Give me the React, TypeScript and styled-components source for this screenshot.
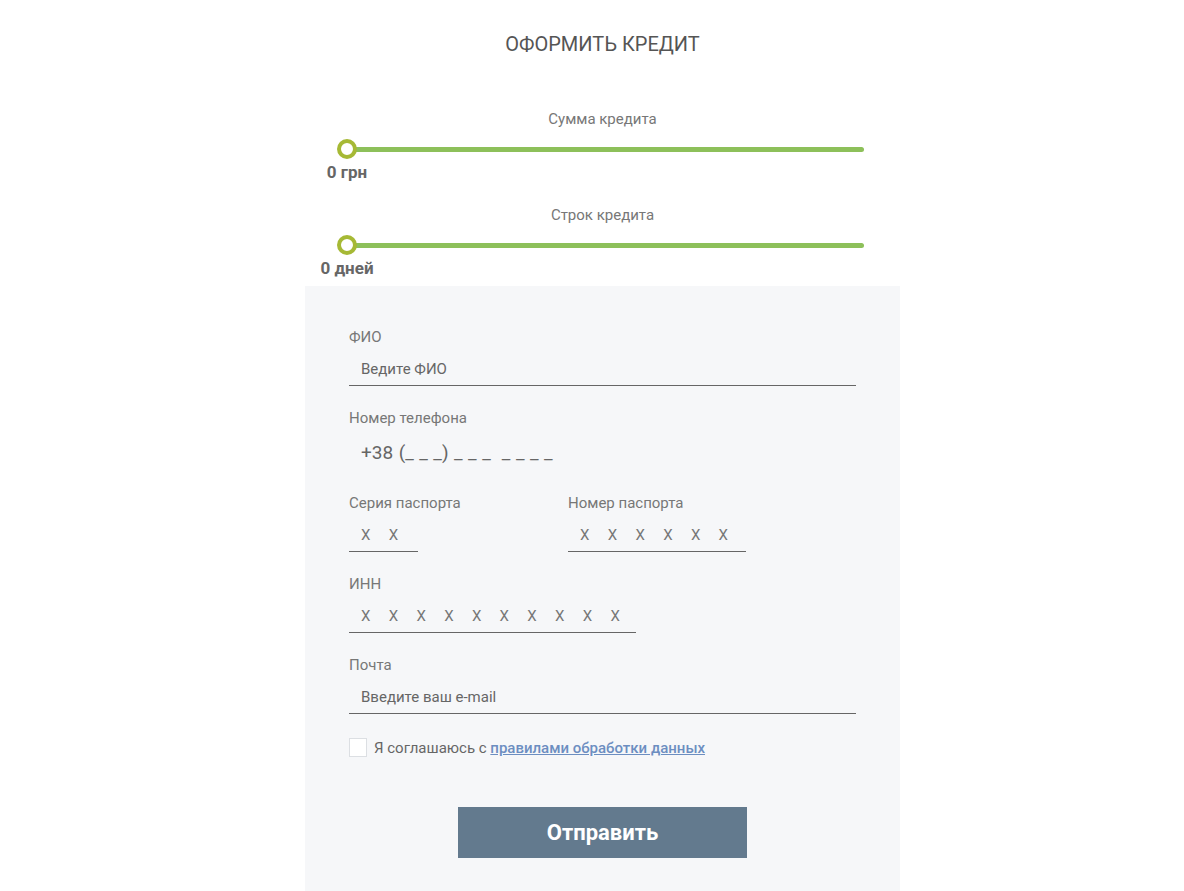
import React from "react";
import styled, { createGlobalStyle } from "styled-components";

const GlobalStyle = createGlobalStyle`
  * { box-sizing: border-box; }
  html, body { margin: 0; padding: 0; background: #ffffff; }
  body { font-family: Roboto, "Noto Sans", Arial, sans-serif; color: #666; }
`;

const Wrapper = styled.div`
  width: 595px;
  margin-left: 305px;
  display: flex;
  flex-direction: column;
`;

const Title = styled.h1`
  margin: 32px 0 0;
  font-size: 20px;
  line-height: 24px;
  font-weight: 400;
  color: #555;
  text-align: center;
  text-transform: uppercase;
`;

const Sliders = styled.div`
  margin-top: 55px;
  display: flex;
  flex-direction: column;
  gap: 25px;
  padding-bottom: 8px;
`;

const SliderGroup = styled.div`
  display: flex;
  flex-direction: column;
`;

const SliderLabel = styled.div`
  font-size: 15px;
  line-height: 17px;
  color: #777;
  text-align: center;
`;

const SliderRow = styled.div`
  position: relative;
  margin: 11px 36px 0 32px;
  height: 20px;
  display: flex;
  align-items: center;
`;

const Track = styled.div`
  margin-left: 10px;
  flex: 1;
  height: 5px;
  border-radius: 3px;
  background: #8dc05a;
`;

const Thumb = styled.div`
  position: absolute;
  left: 0;
  top: 0;
  width: 20px;
  height: 20px;
  border-radius: 50%;
  background: #fff;
  border: 4px solid #a6b935;
`;

const SliderValue = styled.div`
  margin-top: 3px;
  margin-left: 32px;
  width: 20px;
  display: flex;
  justify-content: center;
  white-space: nowrap;
  font-size: 17px;
  line-height: 20px;
  font-weight: 700;
  color: #666;
`;

const Panel = styled.form`
  background: #f6f7f9;
  padding: 43px 44px 40px;
  display: flex;
  flex-direction: column;
  min-height: 606px;
`;

const Field = styled.div<{ $width?: number }>`
  display: flex;
  flex-direction: column;
  width: ${(p) => (p.$width ? `${p.$width}px` : "100%")};
  margin-bottom: 24px;
`;

const Label = styled.label`
  font-size: 15px;
  line-height: 17px;
  color: #777;
  margin-bottom: 7px;
  white-space: nowrap;
`;

const Input = styled.input<{ $spaced?: boolean; $big?: boolean; $plain?: boolean }>`
  font-family: Roboto, "Noto Sans", Arial, sans-serif;
  height: ${(p) => (p.$big ? 37 : 33)}px;
  padding: 0 0 0 12px;
  border: none;
  border-bottom: 1px solid ${(p) => (p.$plain ? "transparent" : "#666")};
  background: transparent;
  outline: none;
  font-size: ${(p) => (p.$big ? 19 : 15)}px;
  letter-spacing: ${(p) => (p.$spaced ? "7.3px" : "normal")};
  word-spacing: ${(p) => (p.$big ? "0.8px" : "normal")};
  color: #666;
  width: 100%;
  &::placeholder {
    color: ${(p) => (p.$spaced ? "#777" : "#666")};
    opacity: 1;
  }
`;

const Row = styled.div`
  display: flex;
  gap: 150px;
`;

const Agree = styled.label`
  display: flex;
  align-items: center;
  gap: 7px;
  font-size: 15px;
  color: #666;
`;

const Box = styled.span`
  width: 18px;
  height: 19px;
  background: #fff;
  border: 1px solid #dcdfe3;
  flex-shrink: 0;
`;

const Link = styled.a`
  color: #6c8ec1;
  font-weight: 500;
  text-decoration: underline;
`;

const Submit = styled.button`
  align-self: center;
  margin-top: 50px;
  width: 289px;
  height: 51px;
  border: none;
  background: #637a8e;
  color: #fff;
  font-family: Roboto, "Noto Sans", Arial, sans-serif;
  font-size: 22px;
  font-weight: 700;
  cursor: pointer;
`;

const Slider = ({ label, value }: { label: string; value: string }) => (
  <SliderGroup>
    <SliderLabel>{label}</SliderLabel>
    <SliderRow>
      <Track />
      <Thumb />
    </SliderRow>
    <SliderValue>{value}</SliderValue>
  </SliderGroup>
);

export default function App() {
  return (
    <>
      <GlobalStyle />
      <Wrapper>
        <Title>Оформить кредит</Title>
        <Sliders>
          <Slider label="Сумма кредита" value="0 грн" />
          <Slider label="Строк кредита" value="0 дней" />
        </Sliders>
        <Panel onSubmit={(e) => e.preventDefault()}>
          <Field>
            <Label>ФИО</Label>
            <Input placeholder="Ведите ФИО" />
          </Field>
          <Field>
            <Label>Номер телефона</Label>
            <Input $big $plain placeholder={"+38 (_ _ _) _ _ _\u00a0\u00a0_ _ _ _"} />
          </Field>
          <Row>
            <Field $width={69}>
              <Label>Серия паспорта</Label>
              <Input $spaced placeholder="X X" />
            </Field>
            <Field $width={178}>
              <Label>Номер паспорта</Label>
              <Input $spaced placeholder="X X X X X X" />
            </Field>
          </Row>
          <Field $width={287}>
            <Label>ИНН</Label>
            <Input $spaced placeholder="X X X X X X X X X X" />
          </Field>
          <Field>
            <Label>Почта</Label>
            <Input placeholder="Введите ваш e-mail" />
          </Field>
          <Agree>
            <Box />
            <span>
              Я соглашаюсь с <Link href="#">правилами обработки данных</Link>
            </span>
          </Agree>
          <Submit type="submit">Отправить</Submit>
        </Panel>
      </Wrapper>
    </>
  );
}
